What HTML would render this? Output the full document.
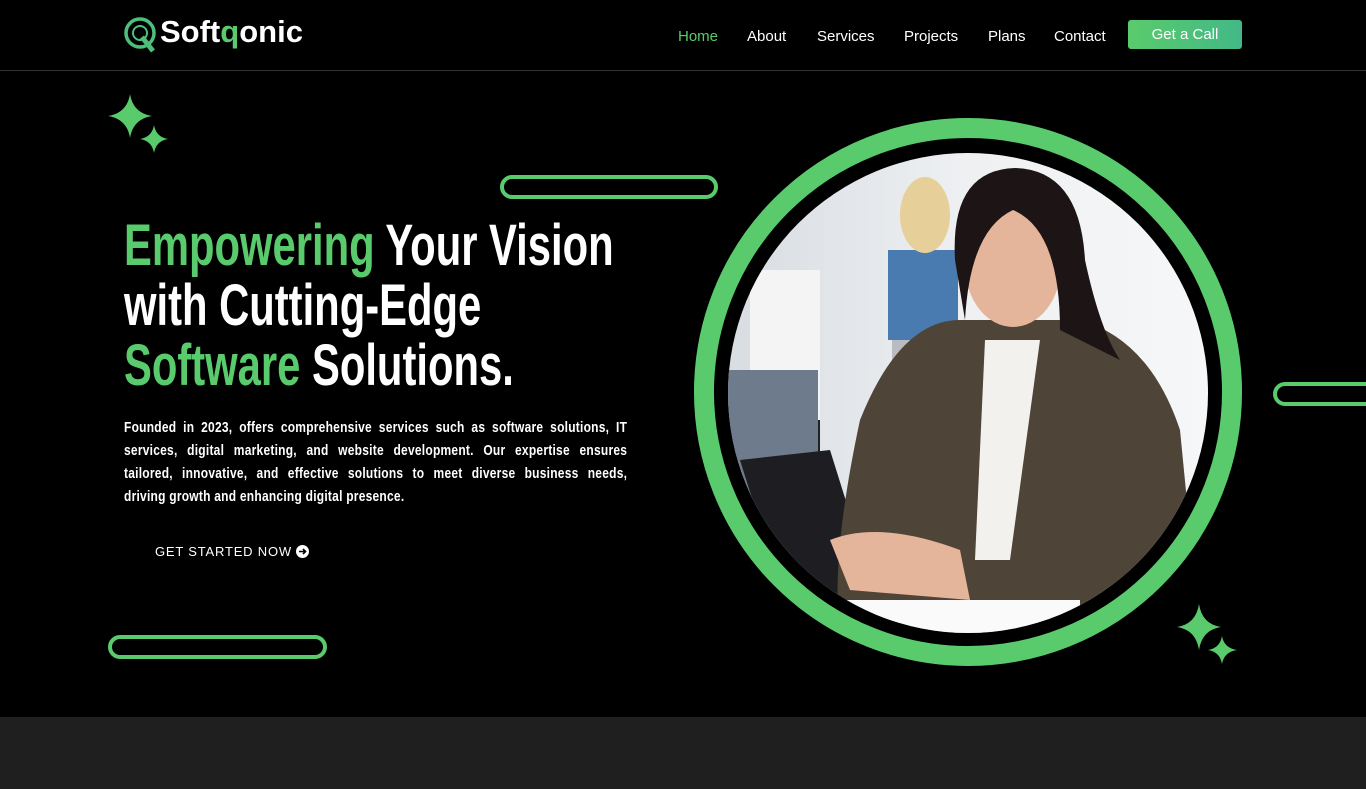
<!DOCTYPE html>
<html><head><meta charset="utf-8"><style>
*{margin:0;padding:0;box-sizing:border-box}
body{width:1366px;height:789px;background:#000;overflow:hidden;font-family:"Liberation Sans",sans-serif;position:relative;color:#fff}
.nav{position:absolute;top:0;left:0;width:1366px;height:71px;border-bottom:1px solid #333}
.logo{position:absolute;left:160px;top:14px;font-size:31px;font-weight:bold;letter-spacing:0px}
.logo span{color:#5acb6c}
.menu{position:absolute;top:28px;font-size:15px}
.btn{position:absolute;left:1128px;top:20px;width:114px;height:29px;background:linear-gradient(90deg,#5acb6c,#43b886);border-radius:3px;font-size:15px;text-align:center;line-height:30px}
.h{position:absolute;left:124px;top:216px;font-size:58px;font-weight:bold;line-height:60px;transform:scaleX(.72);transform-origin:left top;white-space:nowrap;letter-spacing:0}
.g{color:#5acb6c}
.p{position:absolute;left:124px;top:416px;width:629px;font-size:15px;line-height:23px;transform:scaleX(.8);transform-origin:left top;letter-spacing:.3px;font-weight:bold}
.p div{text-align:justify;text-align-last:justify}
.p div.l{text-align-last:left}
.pill{position:absolute;border:4px solid #5acb6c;border-radius:14px;height:24px}
.foot{position:absolute;left:0;top:717px;width:1366px;height:72px;background:#1f1f1f}
</style></head><body>
<div class="nav">
<svg style="position:absolute;left:123px;top:15px" width="38" height="40" viewBox="0 0 38 40"><circle cx="17" cy="18" r="14" fill="none" stroke="#4cc07a" stroke-width="3.5"/><circle cx="17" cy="18" r="7" fill="none" stroke="#4cc07a" stroke-width="2"/><path d="M19 22 L30 36" stroke="#4cc07a" stroke-width="5"/></svg>
<div class="logo">Soft<span>q</span>onic</div>
<div class="menu" style="left:678px;color:#5acb6c">Home</div>
<div class="menu" style="left:747px">About</div>
<div class="menu" style="left:817px">Services</div>
<div class="menu" style="left:904px">Projects</div>
<div class="menu" style="left:988px">Plans</div>
<div class="menu" style="left:1054px">Contact</div>
<div class="btn">Get a Call</div>
</div>
<svg style="position:absolute;left:0;top:0" width="1366" height="789">
<path d="M130 94 Q133 113 152 116 Q133 119 130 138 Q127 119 108 116 Q127 113 130 94Z" fill="#5acb6c"/>
<path d="M154 125 Q156 137 168 139 Q156 141 154 153 Q152 141 140 139 Q152 137 154 125Z" fill="#5acb6c"/>
<path d="M1199 604 Q1202 624 1221 627 Q1202 630 1199 650 Q1196 630 1177 627 Q1196 624 1199 604Z" fill="#5acb6c"/>
<path d="M1222 636 Q1224 648 1237 650 Q1224 652 1222 664 Q1220 652 1208 650 Q1220 648 1222 636Z" fill="#5acb6c"/>
<circle cx="968" cy="392" r="264" fill="none" stroke="#5acb6c" stroke-width="20"/>
<defs><clipPath id="c"><circle cx="968" cy="393" r="240"/></clipPath>
<linearGradient id="bg" x1="0" y1="0" x2="1" y2="0"><stop offset="0" stop-color="#d8dde2"/><stop offset=".5" stop-color="#eef0f2"/><stop offset="1" stop-color="#f6f7f8"/></linearGradient></defs>
<g clip-path="url(#c)">
<rect x="728" y="153" width="480" height="480" fill="url(#bg)"/>
<rect x="750" y="270" width="70" height="230" fill="#f4f4f4"/>
<rect x="760" y="420" width="60" height="90" fill="#222"/>
<rect x="888" y="250" width="70" height="90" fill="#4a7bb0"/>
<rect x="892" y="340" width="55" height="200" fill="#b8bcc2"/>
<ellipse cx="925" cy="215" rx="25" ry="38" fill="#e7cf9a"/>
<rect x="728" y="370" width="90" height="264" fill="#6d7b8c"/>
<path d="M740 460 L830 450 L880 610 L790 620Z" fill="#1e1e22"/>
<path d="M860 420 Q900 320 960 320 L1080 320 Q1150 340 1180 430 L1200 634 L840 634 Q830 560 860 420Z" fill="#4f4438"/>
<path d="M985 340 L1040 340 L1010 560 L975 560Z" fill="#f3f1ee"/>
<ellipse cx="1013" cy="265" rx="48" ry="62" fill="#e4b59b"/>
<path d="M955 260 Q950 170 1015 168 Q1080 170 1085 260 Q1100 330 1120 360 L1060 330 Q1060 230 1013 210 Q970 230 965 320Z" fill="#1c1415"/>
<path d="M830 540 Q880 520 960 550 L970 600 L850 590Z" fill="#e4b59b"/>
<rect x="840" y="600" width="240" height="34" fill="#fafafa"/>
</g>
</svg>
<div class="pill" style="left:500px;top:175px;width:218px"></div>
<div class="pill" style="left:108px;top:635px;width:219px"></div>
<div class="pill" style="left:1273px;top:382px;width:110px"></div>
<div class="h"><span class="g">Empowering</span> Your Vision<br>with Cutting-Edge<br><span class="g">Software</span> Solutions.</div>
<div class="p">
<div>Founded in 2023, offers comprehensive services such as software solutions, IT</div>
<div>services, digital marketing, and website development. Our expertise ensures</div>
<div>tailored, innovative, and effective solutions to meet diverse business needs,</div>
<div class="l">driving growth and enhancing digital presence.</div>
</div>
<div style="position:absolute;left:155px;top:544px;font-size:13px;letter-spacing:.8px;white-space:nowrap">GET STARTED NOW <svg width="13" height="13" viewBox="0 0 13 13" style="vertical-align:-2px"><circle cx="6.5" cy="6.5" r="6.5" fill="#fff"/><path d="M3 6.5H9.5M7 4L9.5 6.5L7 9" stroke="#000" stroke-width="1.6" fill="none"/></svg></div>
<div class="foot"></div>
</body></html>
